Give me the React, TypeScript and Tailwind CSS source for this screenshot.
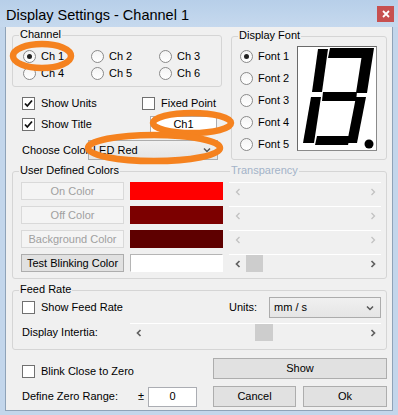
import React from "react";

function Radio({ checked, label }: { checked?: boolean; label: string }) {
  return (
    <div className="flex items-center h-[13px]">
      <span className="w-[13px] h-[13px] rounded-full border border-[#8a8a8a] bg-gradient-to-b from-[#f4f4f4] to-white flex items-center justify-center shrink-0">
        {checked && <span className="w-[5px] h-[5px] rounded-full bg-[#222]" />}
      </span>
      <span className="ml-[5px] leading-none whitespace-nowrap">{label}</span>
    </div>
  );
}

function Check({ checked, label, className }: { checked?: boolean; label: string; className?: string }) {
  return (
    <div className={"flex items-center h-[13px] " + (className || "")}>
      <span className="w-[13px] h-[13px] border border-[#707070] bg-white flex items-center justify-center shrink-0">
        {checked && (
          <svg width="11" height="11" viewBox="0 0 11 11">
            <path d="M2 5.5 L4.3 8 L9 2.5" fill="none" stroke="#111" strokeWidth="1.8" />
          </svg>
        )}
      </span>
      <span className="ml-[6px] leading-none whitespace-nowrap">{label}</span>
    </div>
  );
}

function Chevron({ dir, enabled }: { dir: "l" | "r"; enabled: boolean }) {
  return (
    <svg width="6" height="8" viewBox="0 0 6 8">
      <path
        d={dir === "l" ? "M4.5 1 L1.5 4 L4.5 7" : "M1.5 1 L4.5 4 L1.5 7"}
        fill="none"
        stroke={enabled ? "#606060" : "#c2c2c2"}
        strokeWidth={enabled ? 1.7 : 1.3}
      />
    </svg>
  );
}

function HScroll({ enabled, widthClass, thumbClass }: { enabled: boolean; widthClass: string; thumbClass?: string }) {
  return (
    <div className={"h-[18px] border-t border-white bg-[#f0f0f0] flex items-stretch " + widthClass}>
      <div className="w-[17px] flex items-center justify-center shrink-0">
        <Chevron dir="l" enabled={enabled} />
      </div>
      <div className="flex-1 flex items-stretch">
        {enabled && <div className={"bg-[#cdcdcd] " + (thumbClass || "")} />}
      </div>
      <div className="w-[17px] flex items-center justify-center shrink-0">
        <Chevron dir="r" enabled={enabled} />
      </div>
    </div>
  );
}

function Group({
  legend,
  className,
  children,
  legend2,
}: {
  legend: string;
  className?: string;
  children?: React.ReactNode;
  legend2?: React.ReactNode;
}) {
  return (
    <div className={"relative border border-[#d5d5d5] rounded-[3px] " + (className || "")}>
      <span className="absolute -top-[9px] left-[6px] px-[1px] bg-[#f0f0f0] leading-[15px] whitespace-nowrap">
        {legend}
      </span>
      {legend2}
      {children}
    </div>
  );
}

function Button({ label, disabled, className }: { label: string; disabled?: boolean; className?: string }) {
  return (
    <div
      className={
        "flex items-center justify-center border whitespace-nowrap " +
        (disabled
          ? "bg-[#f4f4f4] border-[#d9d9d9] text-[#a0a0a0] "
          : "bg-[#e1e1e1] border-[#adadad] text-black ") +
        (className || "")
      }
    >
      {label}
    </div>
  );
}

function Combo({ label, className }: { label: string; className?: string }) {
  return (
    <div
      className={
        "flex items-center border border-[#acacac] bg-gradient-to-b from-[#f0f0f0] to-[#e5e5e5] pl-[4px] pr-[6px] " +
        (className || "")
      }
    >
      <span className="flex-1 whitespace-nowrap">{label}</span>
      <svg width="8" height="6" viewBox="0 0 8 6">
        <path d="M1 1.5 L4 4.5 L7 1.5" fill="none" stroke="#555" strokeWidth="1.5" />
      </svg>
    </div>
  );
}

function SevenSeg() {
  return (
    <div className="w-[80px] h-[105px] bg-white border border-[#8a8a8a] border-t-[#6a6a6a] border-l-[#6a6a6a] shrink-0">
      <svg width="78" height="103" viewBox="0 0 78 103">
        <g fill="#000">
          <polygon points="32,1 66,1 64,11 30,11" />
          <polygon points="20,2 30,2 24,45 14,45" />
          <polygon points="65,1 76,1 69,46 58,46" />
          <polygon points="25,45 59,45 58,54 24,54" />
          <polygon points="13,50 23,50 16,96 5,96" />
          <polygon points="58,50 68,50 59,96 49,96" />
          <polygon points="19,89 52,89 50,98 17,98" />
          <circle cx="71" cy="97" r="4.5" />
        </g>
      </svg>
    </div>
  );
}

export default function App() {
  return (
    <div className="relative w-[398px] h-[415px] overflow-hidden bg-[#c3d6eb] font-['Liberation_Sans',Arial,sans-serif] text-[11px] text-black">
      {/* Title bar */}
      <div className="h-[27px] flex items-start bg-gradient-to-b from-[#b7cfe9] to-[#c6d9ee]">
        <span className="mt-[5px] ml-[6px] text-[14.5px] leading-[20px] text-black whitespace-nowrap">
          Display Settings - Channel 1
        </span>
        <div className="ml-auto mr-[4px] mt-[6px] w-[17px] h-[16px] bg-[#c75050] flex items-center justify-center">
          <svg width="8" height="8" viewBox="0 0 8 8">
            <path d="M1 1 L7 7 M7 1 L1 7" stroke="#fff" strokeWidth="1.8" />
          </svg>
        </div>
      </div>

      {/* Client area */}
      <div className="ml-[5px] w-[388px] h-[384px] border-l border-r border-b border-[#8fa3b8] bg-[#f0f0f0] pl-[6px] pr-[5px] pt-[8px]">
        {/* Top section */}
        <div className="flex">
          <div className="w-[210px]">
            <Group legend="Channel" className="h-[52px]">
              <div className="pt-[14px] pl-[10px] grid grid-cols-[68px_68px_68px] gap-y-[4px]">
                <Radio checked label="Ch 1" />
                <Radio label="Ch 2" />
                <Radio label="Ch 3" />
                <Radio label="Ch 4" />
                <Radio label="Ch 5" />
                <Radio label="Ch 6" />
              </div>
            </Group>
            <div className="mt-[10px] pl-[10px] flex items-center h-[13px]">
              <Check checked label="Show Units" className="w-[120px]" />
              <Check label="Fixed Point" />
            </div>
            <div className="mt-[6px] pl-[10px] flex items-center h-[17px]">
              <Check checked label="Show Title" className="w-[128px]" />
              <div className="w-[67px] h-[17px] bg-white border border-[#abadb3] flex items-center justify-center">
                Ch1
              </div>
            </div>
            <div className="mt-[7px] pl-[10px] flex items-center h-[20px]">
              <span className="w-[66px] whitespace-nowrap">Choose Color</span>
              <Combo label="LED Red" className="w-[130px] h-[20px]" />
            </div>
          </div>

          <Group legend="Display Font" className="ml-[9px] mt-[1px] w-[156px] h-[124px]">
            <div className="flex pt-[9px] pl-[8px]">
              <div className="w-[57px] pt-[4px] flex flex-col gap-[9px]">
                <Radio checked label="Font 1" />
                <Radio label="Font 2" />
                <Radio label="Font 3" />
                <Radio label="Font 4" />
                <Radio label="Font 5" />
              </div>
              <SevenSeg />
            </div>
          </Group>
        </div>

        {/* User Defined Colors */}
        <Group
          legend="User Defined Colors"
          className="mt-[11px] h-[108px]"
          legend2={
            <span className="absolute -top-[9px] left-[217px] px-[1px] bg-[#f0f0f0] leading-[15px] text-[#a3b3c8] whitespace-nowrap">
              Transparency
            </span>
          }
        >
          <div className="pt-[10px] pl-[8px] flex flex-col gap-[6px]">
            <div className="flex h-[18px]">
              <Button disabled label="On Color" className="w-[103px]" />
              <div className="ml-[6px] w-[93px] bg-[#ff0000]" />
              <div className="ml-[6px]">
                <HScroll enabled={false} widthClass="w-[152px]" />
              </div>
            </div>
            <div className="flex h-[18px]">
              <Button disabled label="Off Color" className="w-[103px]" />
              <div className="ml-[6px] w-[93px] bg-[#7c0000]" />
              <div className="ml-[6px]">
                <HScroll enabled={false} widthClass="w-[152px]" />
              </div>
            </div>
            <div className="flex h-[18px]">
              <Button disabled label="Background Color" className="w-[103px]" />
              <div className="ml-[6px] w-[93px] bg-[#5e0000]" />
              <div className="ml-[6px]">
                <HScroll enabled={false} widthClass="w-[152px]" />
              </div>
            </div>
            <div className="flex h-[18px]">
              <Button label="Test Blinking Color" className="w-[103px]" />
              <div className="ml-[6px] w-[93px] bg-white border border-[#b5b5b5] border-b-white border-r-white" />
              <div className="ml-[6px]">
                <HScroll enabled widthClass="w-[152px]" thumbClass="w-[17px]" />
              </div>
            </div>
          </div>
        </Group>

        {/* Feed Rate */}
        <Group legend="Feed Rate" className="mt-[11px] h-[60px]">
          <div className="pt-[6px] pl-[9px]">
            <div className="flex items-center h-[21px]">
              <Check label="Show Feed Rate" className="w-[207px]" />
              <span className="w-[40px]">Units:</span>
              <Combo label="mm / s" className="w-[112px] h-[21px]" />
            </div>
            <div className="mt-[5px] flex items-center h-[18px]">
              <span className="w-[108px] whitespace-nowrap">Display Intertia:</span>
              <HScroll enabled widthClass="w-[251px]" thumbClass="ml-[108px] w-[18px]" />
            </div>
          </div>
        </Group>

        {/* Bottom */}
        <div className="mt-[8px] flex">
          <div className="w-[201px] pl-[10px]">
            <div className="h-[21px] pt-[5px] flex items-center">
              <Check label="Blink Close to Zero" />
            </div>
            <div className="mt-[7px] h-[21px] flex items-center">
              <span className="w-[116px] whitespace-nowrap">Define Zero Range:</span>
              <span className="w-[10px]">±</span>
              <div className="w-[49px] h-[20px] bg-white border border-[#abadb3] flex items-center justify-center">
                0
              </div>
            </div>
          </div>
          <div className="w-[174px]">
            <Button label="Show" className="h-[21px] w-full" />
            <div className="mt-[7px] flex gap-[7px]">
              <Button label="Cancel" className="h-[21px] w-[83px]" />
              <Button label="Ok" className="h-[21px] w-[84px]" />
            </div>
          </div>
        </div>
      </div>

      {/* Orange annotation ellipses */}
      <svg className="absolute left-0 top-0 pointer-events-none" width="398" height="415" viewBox="0 0 398 415">
        <g fill="none" stroke="#f5821f" strokeWidth="6.5">
          <ellipse cx="42" cy="56" rx="29" ry="12" />
          <ellipse cx="192" cy="123" rx="39" ry="10" />
          <ellipse cx="154" cy="148" rx="66" ry="13" />
        </g>
      </svg>
    </div>
  );
}
